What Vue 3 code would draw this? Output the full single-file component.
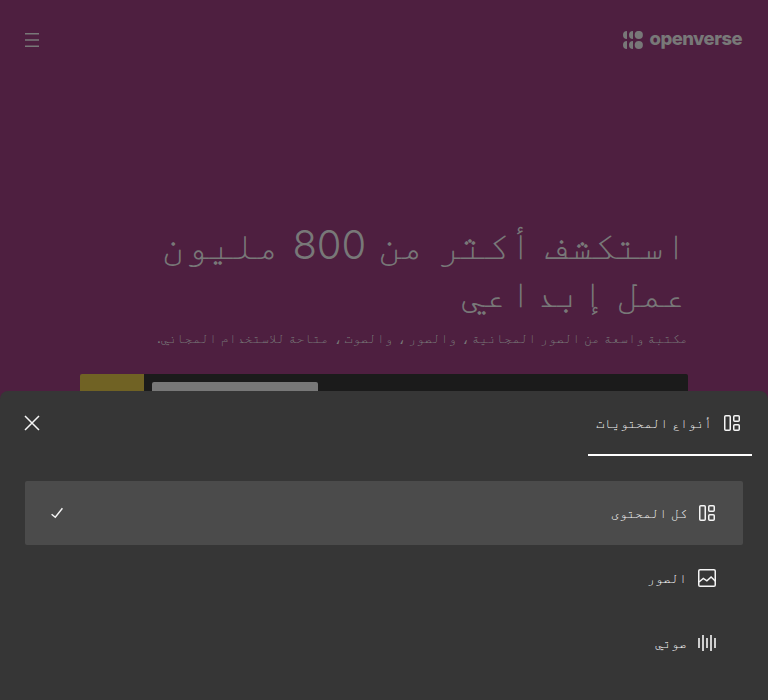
<script setup>
const types = [
  { id: 'all', label: 'كل المحتوى', active: true },
  { id: 'image', label: 'الصور', active: false },
  { id: 'audio', label: 'صوتي', active: false },
]
</script>

<template>
  <div class="page" dir="rtl">
    <header class="header">
      <div class="logo" dir="ltr">
        <svg class="mark" width="20" height="19" viewBox="0 0 20 19" fill="currentColor">
          <path d="M4 0v8a4 4 0 0 1 0-8zM10 0v8a4 4 0 0 1 0-8zM4 10v8a4 4 0 0 1 0-8zM10 10v8a4 4 0 0 1 0-8z" />
          <circle cx="15.8" cy="4" r="4.1" />
          <circle cx="15.8" cy="14" r="4.1" />
        </svg>
        <span class="wordmark">openverse</span>
      </div>
      <svg class="menu" width="14" height="14" viewBox="0 0 14 14" stroke="currentColor" stroke-width="1.5">
        <path d="M0 .85h14M0 7h14M0 13.15h14" />
      </svg>
    </header>

    <main class="hero">
      <h1>استكشف أكثر من 800 مليون عمل إبداعي</h1>
      <p>مكتبة واسعة من الصور المجانية ، والصور ، والصوت ، متاحة للاستخدام المجاني.</p>
      <div class="search">
        <div class="field"><span class="switcher"></span></div>
        <span class="submit"></span>
      </div>
    </main>

    <section class="sheet">
      <div class="tabs">
        <div class="tab">
          <svg width="24" height="24" viewBox="0 0 24 24" fill="none" stroke="currentColor" stroke-width="1.5">
            <rect x="4.75" y="4.75" width="5.5" height="14.5" rx="1" />
            <rect x="13.75" y="4.75" width="5.5" height="5.5" rx="1" />
            <rect x="13.75" y="13.75" width="5.5" height="5.5" rx="1" />
          </svg>
          <span>أنواع المحتويات</span>
        </div>
        <svg class="close" width="16" height="16" viewBox="0 0 16 16" fill="none" stroke="currentColor" stroke-width="1.5">
          <path d="M1 1l14 14M15 1L1 15" />
        </svg>
      </div>

      <ul class="list">
        <li v-for="t in types" :key="t.id" :class="{ active: t.active }">
          <svg width="24" height="24" viewBox="0 0 24 24" fill="none" stroke="currentColor" stroke-width="1.5">
            <template v-if="t.id === 'all'">
              <rect x="4.75" y="4.75" width="5.5" height="14.5" rx="1" />
              <rect x="13.75" y="4.75" width="5.5" height="5.5" rx="1" />
              <rect x="13.75" y="13.75" width="5.5" height="5.5" rx="1" />
            </template>
            <template v-else-if="t.id === 'image'">
              <rect x="3.75" y="3.75" width="16.5" height="16.5" rx="1.3" />
              <path d="M4 16l4.3-3.6 3.6 2.5 4.2-3.9 4.4 4.2" />
            </template>
            <path v-else d="M4 7v10M8 4v16M12 7v10M16 4v16M20 7v10" stroke-opacity=".8" stroke-width="2" />
          </svg>
          <span class="label">{{ t.label }}</span>
          <svg v-if="t.active" class="check" width="12" height="12" viewBox="0 0 12 12" fill="none" stroke="currentColor" stroke-width="1.5">
            <path d="M.6 7.2l3.7 3.1L11.4 1.3" />
          </svg>
        </li>
      </ul>
    </section>
  </div>
</template>

<style>
body {
  overflow: hidden;
}
</style>

<style scoped>
.page {
  height: 700px;
  display: flex;
  flex-direction: column;
  background: #4e1f40;
  color: #787878;
  font-family: Inter, FreeMono, "DejaVu Sans Mono", monospace;
  overflow: hidden;
}
svg {
  display: block;
  flex: none;
}
.header {
  flex: none;
  height: 80px;
  box-sizing: border-box;
  padding: 0 25px;
  display: flex;
  align-items: center;
  justify-content: space-between;
}
.logo {
  display: flex;
  align-items: center;
  gap: 7px;
  margin-right: 1px;
}
.wordmark {
  font-size: 18.5px;
  line-height: 20px;
  font-weight: 800;
  letter-spacing: -0.55px;
  padding-bottom: 4px;
}
.hero {
  flex: none;
  height: 311px;
  box-sizing: border-box;
  padding: 141px 80px 0;
  overflow: hidden;
}
h1 {
  margin: 0;
  font-size: 40px;
  line-height: 48px;
  font-weight: 300;
}
p {
  margin: 11px 0 0;
  font-size: 13.4px;
  line-height: 21px;
}
.search {
  margin-top: 25px;
  height: 64px;
  display: flex;
  border-radius: 2px;
  overflow: hidden;
}
.field {
  flex: 1;
  padding: 8px;
  background: #1b1b1b;
  display: flex;
  justify-content: flex-end;
}
.switcher {
  width: 166px;
  background: #787878;
  border-radius: 2px;
}
.submit {
  width: 64px;
  background: #706224;
}
.sheet {
  flex: 1;
  background: #363636;
  color: #f5f5f5;
  border-radius: 8px 8px 0 0;
  font-size: 13.35px;
}
.tabs {
  height: 65px;
  padding: 0 16px 0 24px;
  display: flex;
  align-items: center;
  justify-content: space-between;
}
.tab {
  align-self: stretch;
  width: 164px;
  box-sizing: border-box;
  padding: 0 8px;
  display: flex;
  align-items: center;
  gap: 8px;
  white-space: nowrap;
  border-bottom: 2px solid #fff;
}
.close {
  margin-top: -2px;
}
.list {
  list-style: none;
  margin: 0;
  padding: 25px 25px 0;
  display: flex;
  flex-direction: column;
  gap: 1px;
}
li {
  height: 64px;
  box-sizing: border-box;
  padding: 0 24px 0 26px;
  border-radius: 2px;
  display: flex;
  align-items: center;
  gap: 8px;
}
.active {
  background: #4b4b4b;
}
.label {
  flex: 1;
}
</style>
